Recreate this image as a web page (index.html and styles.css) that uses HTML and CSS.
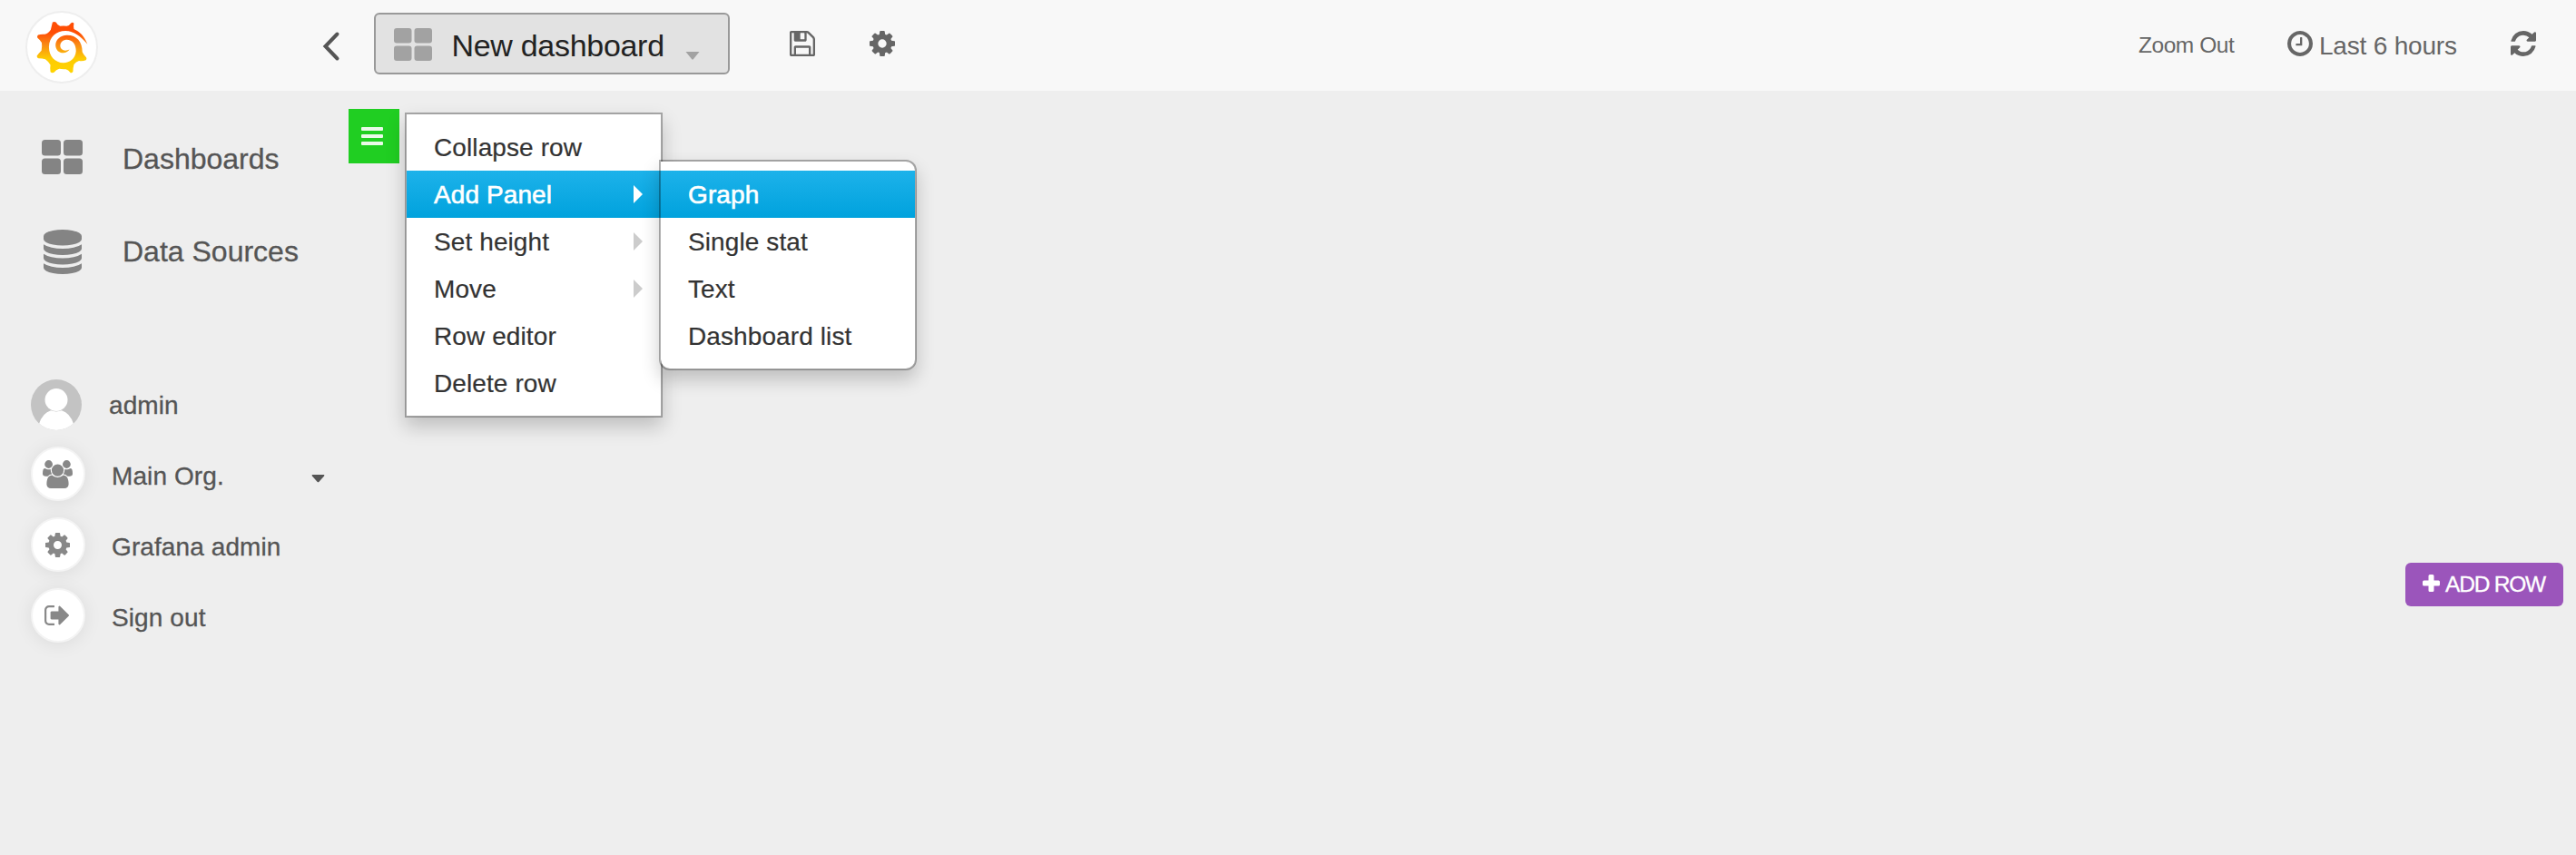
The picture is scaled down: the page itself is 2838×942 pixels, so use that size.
FILE: index.html
```html
<!DOCTYPE html>
<html lang="en">
<head>
<meta charset="utf-8">
<title>Grafana - New dashboard</title>
<link rel="stylesheet" href="styles.css">
</head>
<body>
<svg class="defs" width="0" height="0">
  <symbol id="cog" viewBox="128 128 1536 1536"><path d="M1152 896q0-106-75-181t-181-75-181 75-75 181 75 181 181 75 181-75 75-181zm512-109v222q0 12-8 23t-20 13l-185 28q-19 54-39 91 35 50 107 138 10 12 10 25t-9 23q-27 37-99 108t-94 71q-12 0-26-9l-138-108q-44 23-91 38-16 136-29 186-7 28-36 28h-222q-14 0-24.500-8.500t-11.500-21.500l-28-184q-49-16-90-37l-141 107q-10 9-25 9-14 0-25-11-126-114-165-168-7-10-7-23 0-12 8-23 15-21 51-66.500t54-70.500q-27-50-41-99l-183-27q-13-2-21-12.500t-8-23.500v-222q0-12 8-23t19-13l186-28q14-46 39-92-40-57-107-138-10-12-10-24 0-10 9-23 26-36 98.500-107.500t94.500-71.500q13 0 26 10l138 107q44-23 91-38 16-136 29-186 7-28 36-28h222q14 0 24.500 8.500t11.500 21.500l28 184q49 16 90 37l142-107q9-9 24-9 13 0 25 10 129 119 165 170 7 8 7 22 0 12-8 23-15 21-51 66.500t-54 70.500q26 50 41 98l183 28q13 2 21 12.500t8 23.500z"/></symbol>
</svg>

<header class="navbar">
  <a class="logo">
    <svg width="57" height="58" viewBox="118 68 172 174">
      <defs><linearGradient id="flame" x1="0" y1="0" x2="0" y2="1"><stop offset="0.220" stop-color="#ff4e05"/><stop offset="0.450" stop-color="#f98a14"/><stop offset="0.720" stop-color="#fdcb04"/><stop offset="1" stop-color="#ffd400"/></linearGradient></defs>
      <path fill="url(#flame)" d="M288 145C278 118 262 104 243 95Q241 84 243 76Q240 71 234 74Q228 83 219 85Q208 83 197 85Q188 82 184 73Q179 68 172 72Q169 84 166 97Q157 110 146 112Q134 111 124 114Q119 118 122 124Q131 131 136 140Q138 154 135 166Q126 175 120 184Q119 191 125 192Q138 192 148 195Q159 203 165 214Q163 226 165 237Q170 242 177 239Q184 230 194 227Q206 229 216 228Q224 230 232 240Q238 242 240 236Q240 223 243 212Q250 203 260 200Q272 202 283 198Q287 194 284 189Q275 181 271 171C271 137 253 115 220 115C197 116 182 130 182 149C183 166 195 175 209 174C219 173 226 168 228 162C218 169 206 167 200 159C194 149 199 132 217 130C238 129 250 145 250 168C248 193 230 207 208 207C180 206 160 185 160 154C161 122 184 101 215 101C244 102 265 119 288 145Z"/>
    </svg>
  </a>
  <svg class="back" width="20" height="34" viewBox="0 0 20 34"><path d="M16.500 3.500 3.500 17l13 13.500" fill="none" stroke="#555" stroke-width="4" stroke-linecap="round"/></svg>
  <div class="picker">
    <svg class="picker-grid" width="42" height="36" viewBox="0 0 42 36"><rect width="19.500" height="16.500" rx="3"/><rect x="22.500" width="19.500" height="16.500" rx="3"/><rect y="19.500" width="19.500" height="16.500" rx="3"/><rect x="22.500" y="19.500" width="19.500" height="16.500" rx="3"/></svg>
    <span class="picker-title">New dashboard</span>
    <svg class="picker-caret" width="16" height="9" viewBox="0 0 16 9"><path d="M0.500 0h15L8.800 8.300q-.8.700-1.600 0z"/></svg>
  </div>
  <svg class="save" width="28" height="28" viewBox="128 128 1536 1536"><path d="M512 1536h768v-384h-768v384zm896 0h128v-896q0-14-10-38.500t-20-34.500l-281-281q-10-10-34-20t-39-10v416q0 40-28 68t-68 28h-576q-40 0-68-28t-28-68v-416h-128v1280h128v-416q0-40 28-68t68-28h832q40 0 68 28t28 68v416zm-384-928v-320q0-13-9.500-22.500t-22.500-9.500h-192q-13 0-22.500 9.500t-9.500 22.500v320q0 13 9.500 22.500t22.500 9.500h192q13 0 22.500-9.500t9.500-22.500zm640 32v928q0 40-28 68t-68 28h-1344q-40 0-68-28t-28-68v-1344q0-40 28-68t68-28h928q40 0 88 20t76 48l280 280q28 28 48 76t20 88z"/></svg>
  <svg class="settings" width="28" height="28"><use href="#cog"/></svg>
  <div class="time-nav">
    <span class="zoom-out">Zoom Out</span>
    <svg class="clock" width="28" height="28" viewBox="128 128 1536 1536"><path d="M1024 544v448q0 14-9 23t-23 9h-320q-14 0-23-9t-9-23v-64q0-14 9-23t23-9h224v-352q0-14 9-23t23-9h64q14 0 23 9t9 23zm416 352q0-148-73-273t-198-198-273-73-273 73-198 198-73 273 73 273 198 198 273 73 273-73 198-198 73-273zm224 0q0 209-103 385.500t-279.500 279.500-385.500 103-385.500-103-279.500-279.500-103-385.500 103-385.500 279.500-279.500 385.500-103 385.500 103 279.500 279.500 103 385.500z"/></svg>
    <span class="time-range">Last 6 hours</span>
    <svg class="refresh" width="28" height="28" viewBox="128 128 1536 1536"><path d="M1639 1056q0 5-1 7-64 268-268 434.500t-478 166.500q-146 0-282.500-55t-243.500-157l-129 129q-19 19-45 19t-45-19-19-45v-448q0-26 19-45t45-19h448q26 0 45 19t19 45-19 45l-137 137q71 66 161 102t187 36q134 0 250-65t186-179q11-17 53-117 8-23 30-23h192q13 0 22.500 9.500t9.500 22.500zm25-800v448q0 26-19 45t-45 19h-448q-26 0-45-19t-19-45 19-45l138-138q-148-137-349-137-134 0-250 65t-186 179q-11 17-53 117-8 23-30 23h-199q-13 0-22.500-9.500t-9.500-22.500v-7q65-268 270-434.500t480-166.500q146 0 284 55.500t245 156.500l130-129q19-19 45-19t45 19 19 45z"/></svg>
  </div>
</header>

<div class="layout">
  <nav class="sidemenu">
    <a class="nav-item">
      <span class="nav-icon nav-icon-grid"><svg width="45" height="38" viewBox="0 0 45 38"><rect width="21" height="17.500" rx="3.500"/><rect x="24" width="21" height="17.500" rx="3.500"/><rect y="20.500" width="21" height="17.500" rx="3.500"/><rect x="24" y="20.500" width="21" height="17.500" rx="3.500"/></svg></span>
      <span>Dashboards</span>
    </a>
    <a class="nav-item">
      <span class="nav-icon"><svg width="42" height="49" viewBox="128 0 1536 1792"><path d="M896 768q237 0 443-43t325-127v170q0 69-103 128t-280 93.500-385 34.500-385-34.500-280-93.500-103-128v-170q119 84 325 127t443 43zm0 768q237 0 443-43t325-127v170q0 69-103 128t-280 93.500-385 34.500-385-34.500-280-93.500-103-128v-170q119 84 325 127t443 43zm0-384q237 0 443-43t325-127v170q0 69-103 128t-280 93.500-385 34.500-385-34.500-280-93.500-103-128v-170q119 84 325 127t443 43zm0-1152q208 0 385 34.500t280 93.500 103 128v128q0 69-103 128t-280 93.500-385 34.500-385-34.500-280-93.500-103-128v-128q0-69 103-128t280-93.500 385-34.500z"/></svg></span>
      <span>Data Sources</span>
    </a>
    <div class="account">
      <a class="profile">
        <svg class="avatar" width="56" height="56" viewBox="0 0 56 56"><defs><clipPath id="disc"><circle cx="28" cy="28" r="28"/></clipPath></defs><g clip-path="url(#disc)"><rect width="56" height="56" fill="#c3c3c3"/><circle cx="28" cy="22.500" r="12.500" fill="#fff"/><path fill="#fff" d="M9 49Q13 37 22 34.300Q28 36.500 34 34.300Q43 37 47 49V56H9z"/></g></svg>
        <span>admin</span>
      </a>
      <a class="account-item">
        <span class="badge"><svg width="33" height="31" viewBox="0 0 1920 1792"><path d="M593 896q-162 5-265 128h-134q-82 0-138-40.500t-56-118.500q0-353 124-353 6 0 43.500 21t97.500 42.500 119 21.500q67 0 133-23-5 37-5 66 0 139 81 256zm1071 637q0 120-73 189.500t-194 69.500h-874q-121 0-194-69.500t-73-189.500q0-53 3.500-103.500t14-109 26.500-108.500 43-97.500 62-81 85.500-53.500 111.500-20q10 0 43 21.500t73 48 107 48 135 21.500 135-21.500 107-48 73-48 43-21.500q61 0 111.500 20t85.500 53.500 62 81 43 97.500 26.500 108.500 14 109 3.500 103.500zm-1024-1277q0 106-75 181t-181 75-181-75-75-181 75-181 181-75 181 75 75 181zm704 384q0 159-112.500 271.500t-271.500 112.500-271.500-112.500-112.500-271.500 112.500-271.500 271.500-112.500 271.500 112.500 112.500 271.500zm576 225q0 78-56 118.500t-138 40.500h-134q-103-123-265-128 81-117 81-256 0-29-5-66 66 23 133 23 59 0 119-21.500t97.500-42.500 43.500-21q124 0 124 353zm-128-609q0 106-75 181t-181 75-181-75-75-181 75-181 181-75 181 75 75 181z"/></svg></span>
        <span class="account-label">Main Org.</span>
        <svg class="org-caret" width="15" height="9" viewBox="0 0 15 9"><path d="M1.200 0h12.600q1.200.5.300 1.500L8.300 8q-.8.700-1.600 0L.9 1.500Q0 .5 1.200 0z"/></svg>
      </a>
      <a class="account-item">
        <span class="badge"><svg width="27" height="27"><use href="#cog"/></svg></span>
        <span class="account-label">Grafana admin</span>
      </a>
      <a class="account-item">
        <span class="badge badge-exit"><svg width="27" height="22" viewBox="64 256 1568 1280"><path d="M704 1440q0 4 1 20t.5 26.500-3 23.500-10 19.500-20.500 6.500h-320q-119 0-203.500-84.500t-84.500-203.500v-704q0-119 84.500-203.500t203.500-84.500h320q13 0 22.500 9.500t9.500 22.500q0 4 1 20t.5 26.500-3 23.500-10 19.500-20.500 6.500h-320q-66 0-113 47t-47 113v704q0 66 47 113t113 47h312l11.500 1 11.500 3 8 5.500 7 9 2 13.500zm928-544q0 26-19 45l-544 544q-19 19-45 19t-45-19-19-45v-288h-448q-26 0-45-19t-19-45v-384q0-26 19-45t45-19h448v-288q0-26 19-45t45-19 45 19l544 544q19 19 19 45z"/></svg></span>
        <span class="account-label">Sign out</span>
      </a>
    </div>
  </nav>

  <main class="dashboard">
    <div class="row-handle">
      <span class="bar"></span><span class="bar"></span><span class="bar"></span>
      <ul class="menu row-menu">
        <li class="menu-item">Collapse row</li>
        <li class="menu-item has-sub active">Add Panel
          <ul class="menu sub-menu">
            <li class="menu-item active">Graph</li>
            <li class="menu-item">Single stat</li>
            <li class="menu-item">Text</li>
            <li class="menu-item">Dashboard list</li>
          </ul>
        </li>
        <li class="menu-item has-sub">Set height</li>
        <li class="menu-item has-sub">Move</li>
        <li class="menu-item">Row editor</li>
        <li class="menu-item">Delete row</li>
      </ul>
    </div>
    <button class="add-row"><svg width="19" height="19" viewBox="0 0 19 19"><path d="M8 0h3q1.500 0 1.500 1.500v5h5Q19 6.500 19 8v3q0 1.500-1.500 1.500h-5v5Q12.500 19 11 19H8q-1.500 0-1.500-1.500v-5h-5Q0 12.500 0 11V8q0-1.500 1.500-1.500h5v-5Q6.500 0 8 0z"/></svg><span>ADD ROW</span></button>
  </main>
</div>
</body>
</html>
```

FILE: styles.css
```css
* { box-sizing: border-box; }

body {
  margin: 0;
  height: 942px;
  overflow: hidden;
  background: #eee;
  color: #555;
  font-family: "Liberation Sans", Arial, sans-serif;
  font-size: 28px;
  line-height: 40px;
  -webkit-text-stroke: 0.300px;
}

svg { display: block; flex: none; fill: currentColor; }
.defs { position: absolute; }
span { white-space: nowrap; }

/* Top bar */
.navbar {
  display: flex;
  align-items: flex-start;
  height: 100px;
  background: #f8f8f8;
  color: #666;
  -webkit-text-stroke: 0;
}
.logo {
  display: flex;
  align-items: center;
  justify-content: center;
  width: 80px;
  height: 80px;
  margin: 12px 0 0 28px;
  border: 2px solid #eee;
  border-radius: 50%;
  background: #fff;
}
.back { margin: 33.500px 0 0 247px; }
.picker {
  display: flex;
  width: 392px;
  height: 68px;
  margin: 14px 0 0 37px;
  padding-left: 20px;
  border: 2px solid #999;
  border-radius: 6px;
  background: #e2e2e2;
  color: #a2a2a2;
}
.picker-grid { margin-top: 14.500px; }
.picker-title {
  width: 256px;
  margin: 12px 0 0 21.500px;
  color: #222;
  font-size: 34px;
  line-height: 44px;
  letter-spacing: -0.300px;
}
.picker-caret { margin: 41px 0 0 1px; }
.save { margin: 34px 0 0 66px; }
.settings { margin: 34px 0 0 60px; }
.time-nav {
  display: flex;
  margin-left: auto;
  padding-right: 44px;
}
.zoom-out {
  margin-top: 30px;
  width: 164px;
  font-size: 24.500px;
  letter-spacing: -0.450px;
}
.clock { margin-top: 34px; }
.time-range {
  width: 211px;
  margin: 30.500px 0 0 7px;
  letter-spacing: -0.200px;
}
.refresh { margin-top: 34px; }

/* Side menu */
.layout { display: flex; }
.sidemenu { width: 384px; padding-top: 24px; }
.nav-item {
  display: flex;
  align-items: center;
  height: 102px;
  font-size: 32px;
}
.nav-icon {
  display: flex;
  justify-content: center;
  width: 137px;
  color: #848484;
}
.nav-icon-grid { padding-bottom: 4px; }
.nav-item .nav-icon { margin-right: -2px; }
.account { margin-top: 79px; letter-spacing: 0.100px; }
.profile {
  display: flex;
  align-items: center;
  height: 76px;
  padding: 2px 0 0 34px;
}
.profile span { padding-top: 2px; }
.avatar { margin-right: 30px; }
.account-item {
  display: flex;
  align-items: center;
  height: 78px;
  padding-left: 34px;
}
.badge {
  display: flex;
  align-items: center;
  justify-content: center;
  width: 60px;
  height: 60px;
  border: 2px solid #f4f4f4;
  border-radius: 50%;
  background: #fff;
  box-shadow: 0 2px 20px rgba(0, 0, 0, 0.080);
  color: #888;
}
.badge svg { margin-right: 1px; }
.badge-exit { padding-right: 2px; }
.account-label { width: 220px; margin-left: 29px; padding-top: 6px; }
.org-caret { margin-top: 10px; }

/* Dashboard */
.dashboard {
  display: flex;
  flex: 1;
  flex-direction: column;
  padding: 20px 14px 0 0;
}
.row-handle {
  position: relative;
  display: flex;
  flex-direction: column;
  gap: 4px;
  width: 56px;
  height: 60px;
  padding: 20px 0 0 14px;
  background: #20ce22;
}
.bar {
  width: 24px;
  height: 4px;
  border-radius: 1px;
  background: #e9fae9;
}

.menu {
  position: absolute;
  width: 284px;
  margin: 0;
  padding: 10px 0;
  list-style: none;
  border: 2px solid rgba(0, 0, 0, 0.300);
  background: #fff;
  background-clip: padding-box;
  box-shadow: 0 10px 20px rgba(0, 0, 0, 0.200);
  color: #333;
  letter-spacing: 0.100px;
}
.row-menu { top: 4px; left: 62px; z-index: 1; }
.sub-menu { top: -12px; left: 278px; border-radius: 0 12px 12px 12px; }
.menu-item {
  position: relative;
  height: 52px;
  padding: 7px 30px 5px;
  white-space: nowrap;
  -webkit-text-stroke: 0.200px;
}
.menu-item.active {
  background: linear-gradient(#1db2ea, #00a2dd);
  color: #fff;
  -webkit-text-stroke: 0.600px;
}
.sub-menu .menu-item:not(.active) { color: #333; }
.has-sub::after {
  content: "";
  position: absolute;
  top: 16px;
  right: 20px;
  border: solid transparent;
  border-width: 10px 0 10px 10px;
  border-left-color: #ccc;
}
.has-sub.active::after { border-left-color: #fff; }

.add-row {
  display: flex;
  align-items: center;
  align-self: flex-end;
  width: 174px;
  height: 48px;
  margin-top: 440px;
  padding: 0 0 0 19px;
  border: 0;
  border-radius: 6px;
  background: #9b55bb;
  color: #fff;
  font-family: inherit;
  font-size: 24.500px;
  letter-spacing: -1.200px;
}
.add-row svg { margin-bottom: 3px; }
.add-row span { margin-left: 6px; }
```
